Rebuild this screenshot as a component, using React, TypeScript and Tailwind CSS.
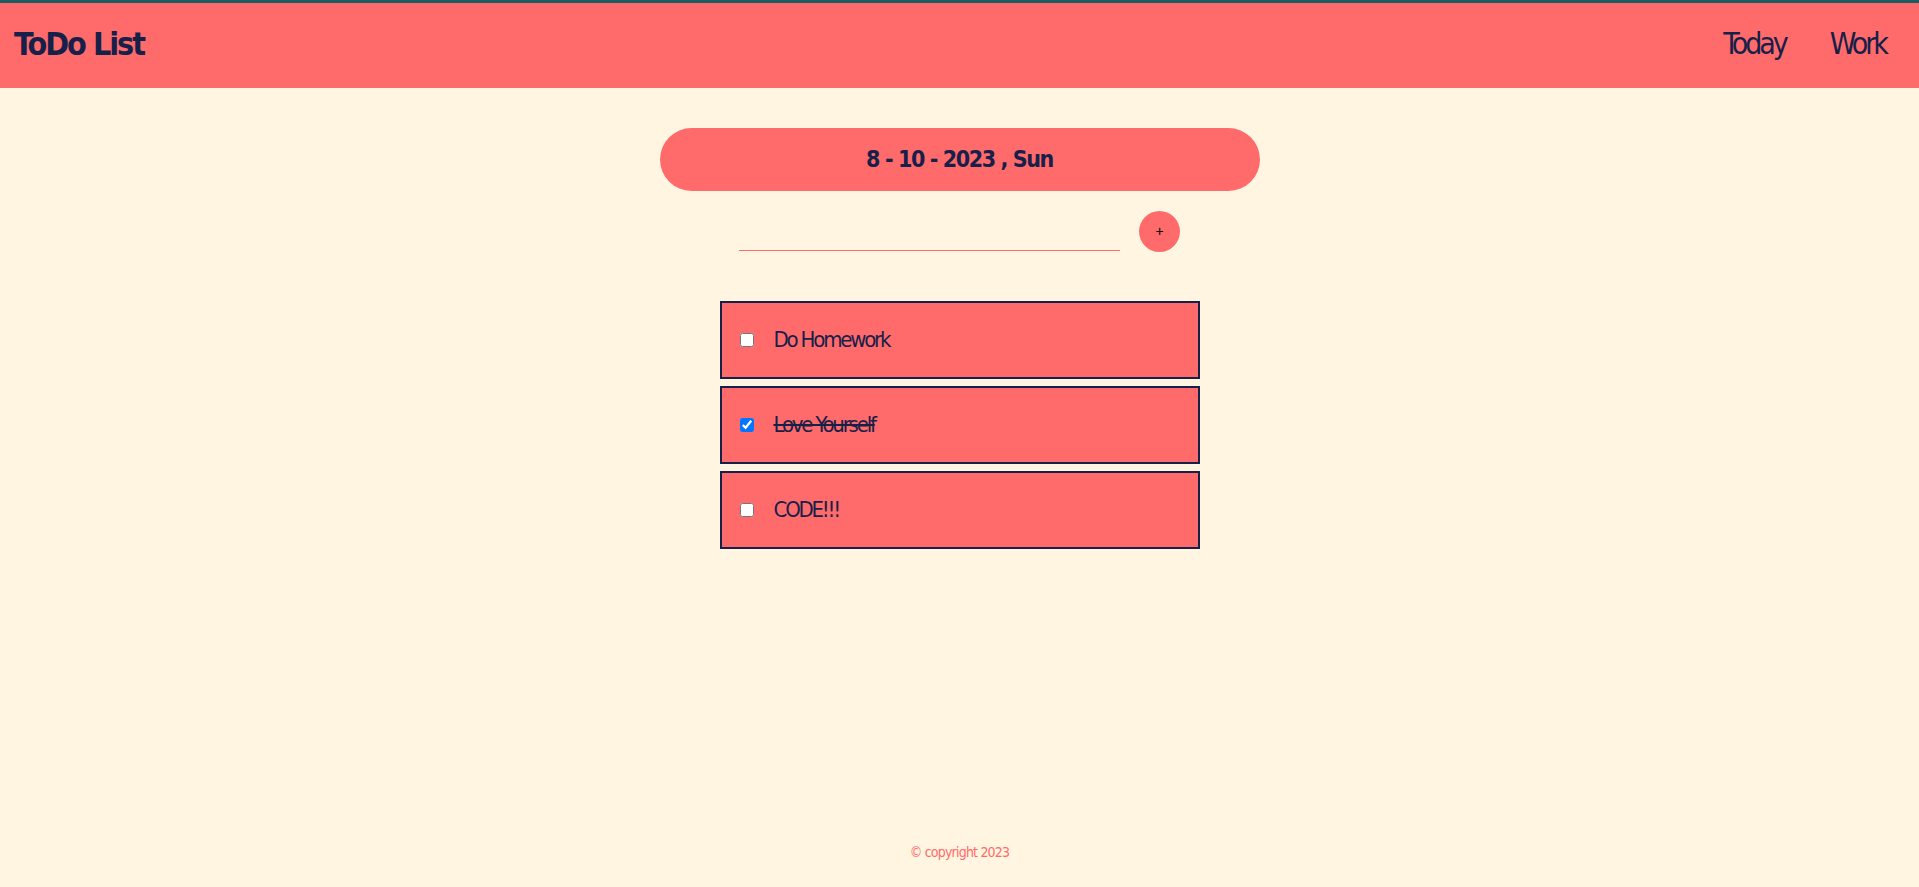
import React, { useState } from "react";

const font = { fontFamily: '"DejaVu Sans Condensed", "Liberation Sans", sans-serif' };

export default function App() {
  const [items, setItems] = useState([
    { text: "Do Homework", done: false },
    { text: "Love Yourself", done: true },
    { text: "CODE!!!", done: false },
  ]);
  const [value, setValue] = useState("");

  return (
    <div className="min-h-screen flex flex-col bg-[#fff5e1] text-[#172048]" style={font}>
      <header className="h-[88px] border-t-[3px] border-[#1b5c61] bg-[#ff6b6b] flex items-center justify-between pl-[14px] pr-[33px] pb-[4px]">
        <h1 className="text-[32px] font-bold tracking-[-2px] leading-none">ToDo List</h1>
        <nav className="flex items-center gap-[44px] text-[30px] tracking-[-3px] leading-none">
          <a>Today</a>
          <a>Work</a>
        </nav>
      </header>

      <main className="flex-1 flex flex-col items-center pt-[40px]">
        <div className="w-[600px] h-[63px] rounded-full bg-[#ff6b6b] flex items-center justify-center">
          <span className="text-[23px] font-bold tracking-[-1.4px] leading-none">8 - 10 - 2023 , Sun</span>
        </div>

        <form
          className="mt-[20px] flex items-end gap-[19px]"
          onSubmit={(e) => {
            e.preventDefault();
            if (value.trim()) {
              setItems([...items, { text: value.trim(), done: false }]);
              setValue("");
            }
          }}
        >
          <input
            value={value}
            onChange={(e) => setValue(e.target.value)}
            className="w-[381px] h-[30px] bg-transparent border-b border-[#ff6b6b] outline-none text-[20px]"
          />
          <button
            type="submit"
            className="w-[41px] h-[41px] rounded-full bg-[#ff6b6b] text-black text-[14px] flex items-center justify-center mb-[-1px]"
            style={{ fontFamily: '"Liberation Sans", sans-serif' }}
          >
            +
          </button>
        </form>

        <div className="mt-[50px] flex flex-col gap-[7px]">
          {items.map((it, i) => (
            <div
              key={i}
              className="w-[480px] h-[78px] border-2 border-[#172048] bg-[#ff6b6b] flex items-center pl-[15px]"
            >
              <input
                type="checkbox"
                checked={it.done}
                onChange={() =>
                  setItems(items.map((x, j) => (j === i ? { ...x, done: !x.done } : x)))
                }
                className="w-[14px] h-[14px] m-[3px] mr-[20px]"
              />
              <span className={`text-[22px] tracking-[-2.2px] leading-none ${it.done ? "line-through" : ""}`}>
                {it.text}
              </span>
            </div>
          ))}
        </div>
      </main>

      <footer className="h-[42px] flex items-start justify-center">
        <p className="text-[14px] tracking-[-0.8px] text-[#ff6b6b] leading-none">© copyright 2023</p>
      </footer>
    </div>
  );
}
